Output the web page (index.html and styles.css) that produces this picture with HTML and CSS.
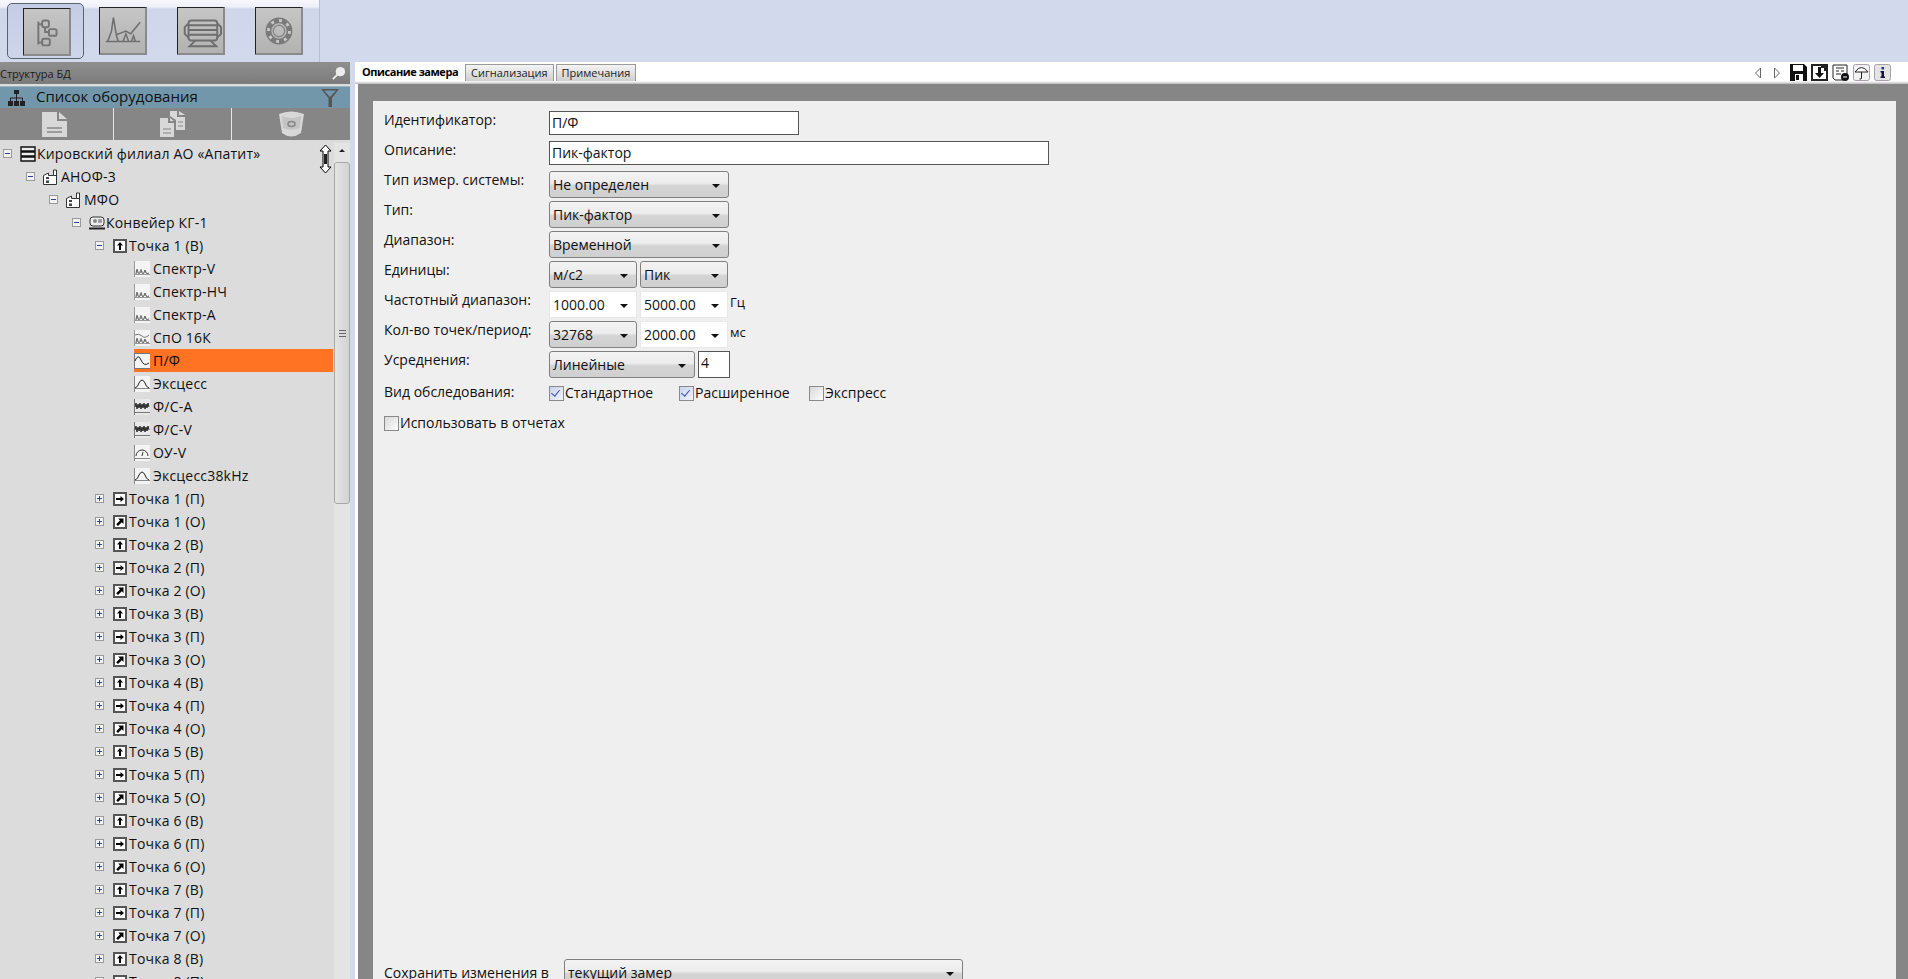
FILE: index.html
```html
<!DOCTYPE html>
<html lang="ru">
<head>
  <meta charset="UTF-8" />
  <title>Структура БД</title>
  <link rel="stylesheet" href="styles.css">
</head>
<body>

  <svg class="sprite" xmlns="http://www.w3.org/2000/svg">
    <symbol id="i-up" viewBox="0 0 14 14"><rect x="1" y="1" width="12" height="12" fill="#fff" stroke="#555" stroke-width="2"/><path d="M7 3 L10 6.5 H8 V11 H6 V6.5 H4 Z" fill="#000"/></symbol>
    <symbol id="i-right" viewBox="0 0 14 14"><rect x="1" y="1" width="12" height="12" fill="#fff" stroke="#555" stroke-width="2"/><path d="M11 7 L7.5 10 V8 H3 V6 H7.5 V4 Z" fill="#000"/></symbol>
    <symbol id="i-diag" viewBox="0 0 14 14"><rect x="1" y="1" width="12" height="12" fill="#fff" stroke="#555" stroke-width="2"/><path d="M10.5 3.5 V9 L8.8 7.3 L5 11 L3.2 9.2 L7 5.4 L5.2 3.5 Z" fill="#000"/></symbol>
    <symbol id="i-spec" viewBox="0 0 16 16"><rect width="16" height="16" fill="#f4f4f4"/><path d="M.5 0 V16 M0 13.5 H16" stroke="#999"/><path d="M2 13 Q3 4 4 12 Q5 13 6 12 Q7 5 8 12 Q9 13 10 12 Q11 6 12 12 Q13 13 15 12" fill="none" stroke="#555"/></symbol>
    <symbol id="i-spo" viewBox="0 0 16 16"><rect width="16" height="16" fill="#f4f4f4"/><path d="M.5 0 V16 M0 13.5 H16" stroke="#999"/><path d="M2 13 Q3 4 4 12 Q5 13 6 12 Q7 5 8 12 Q9 13 10 12 Q11 6 12 12 Q13 13 15 12" fill="none" stroke="#555"/><path d="M1 5 Q5 3 8 6 T15 5" fill="none" stroke="#777"/></symbol>
    <symbol id="i-wave" viewBox="0 0 16 16"><rect width="16" height="16" fill="#f4f4f4"/><path d="M.5 0 V16 M0 .5 H16 M0 15.5 H16" stroke="#777"/><path d="M1 8 Q4 0 7 7 T15 10" fill="none" stroke="#222"/></symbol>
    <symbol id="i-bell" viewBox="0 0 16 16"><rect width="16" height="16" fill="#f4f4f4"/><path d="M.5 0 V16 M0 12.5 H16" stroke="#888"/><path d="M1 12 Q4 11 5 7 Q8 1 11 7 Q12 11 15 12" fill="none" stroke="#222"/></symbol>
    <symbol id="i-noise" viewBox="0 0 16 16"><rect width="16" height="16" fill="#e8e8e8"/><path d="M.5 0 V16 M0 13.5 H16" stroke="#777"/><path d="M1 8 L2 4 L3 10 L4 5 L5 9 L6 4 L7 10 L8 5 L9 9 L10 4 L11 10 L12 5 L13 9 L14 4 L15 8" fill="none" stroke="#222"/></symbol>
    <symbol id="i-gauge" viewBox="0 0 16 16"><rect width="16" height="16" fill="#f4f4f4"/><path d="M.5 0 V16 M0 13.5 H16" stroke="#888"/><path d="M2 11 A6 6 0 0 1 14 11 M8 11 L9 7" fill="none" stroke="#333"/></symbol>
    <symbol id="i-machine" viewBox="0 0 16 16"><rect x="1" y="2" width="14" height="9" rx="3" fill="#eee" stroke="#333"/><circle cx="6" cy="6" r="2" fill="#888"/><path d="M9 5 H13 M9 7 H13" stroke="#555"/><path d="M0 13.5 H16" stroke="#222" stroke-width="2"/></symbol>
    <symbol id="i-plant" viewBox="0 0 16 16"><path d="M.5 6.5 L5.5 4 V6.5 H10.5 V1 H13.5 V15.5 H.5 Z" fill="#fff" stroke="#333"/><path d="M3 8 H6 V10 H3 Z M3 11.5 H6 V14 H3 Z" fill="#444"/><path d="M10.5 6.5 H13.5" stroke="#333"/></symbol>
    <symbol id="i-server" viewBox="0 0 16 16"><path d="M1 1 H15 V5 H1 Z M1 6 H15 V10 H1 Z M1 11 H15 V15 H1 Z" fill="#eee" stroke="#111" stroke-width="1.4"/></symbol>
  </svg>

  <header class="topbar">
    <div class="ribbon">
      <div class="tool-selected">
        <div class="tool-btn">
          <svg viewBox="0 0 47 47"><g fill="none" stroke="#757575" stroke-width="2"><path d="M15 13 V37 M15 16 H19 M15 35 H19 M22 19 V24 H26"/><rect x="19" y="12" width="7" height="7" rx="2"/><rect x="26" y="21" width="8" height="7" rx="2"/><rect x="19" y="31" width="8" height="7" rx="2"/></g></svg>
        </div>
      </div>
      <div class="tool-btn">
        <svg viewBox="0 0 47 47"><g fill="none" stroke="#6f6f6f" stroke-width="1.6"><path d="M6 35 H42"/><path d="M8 35 L12 24 L14 10 L17 28 L19 35 M17 28 L22 26 L27 24 L32 27 L42 15"/><path d="M24 35 L27 27 L30 35 M33 35 L35 29 L37 35"/></g></svg>
      </div>
      <div class="tool-btn">
        <svg viewBox="0 0 47 47"><g fill="none" stroke="#6e6e6e" stroke-width="2"><rect x="11" y="13" width="30" height="21" rx="3"/><path d="M11 18 H41 M11 23 H41 M11 28 H41"/><path d="M11 16 L7 20 V27 L11 31 M41 16 L45 20 V27 L41 31"/><path d="M18 34 L12 40 H40 L34 34"/></g></svg>
      </div>
      <div class="tool-btn">
        <svg viewBox="0 0 47 47"><circle cx="24" cy="24" r="11" fill="none" stroke="#7a7a7a" stroke-width="6"/><circle cx="24" cy="24" r="11" fill="none" stroke="#c9c9c9" stroke-width="3" stroke-dasharray="3 5.6"/><circle cx="24" cy="24" r="6" fill="none" stroke="#8a8a8a" stroke-width="1.5"/></svg>
      </div>
    </div>
  </header>

  <div class="main">
    <aside class="sidebar">
      <div class="side-title">
        <span>Структура БД</span>
        <svg class="pin" viewBox="0 0 16 16"><circle cx="10" cy="6" r="5" fill="#ededed"/><path d="M7 9 L2 14" stroke="#eee" stroke-width="2"/></svg>
      </div>
      <div class="list-head">
        <svg class="org-icon" viewBox="0 0 17 16"><g fill="#222"><rect x="6" y="0" width="5" height="4"/><rect x="0" y="11" width="5" height="5"/><rect x="6" y="11" width="5" height="5"/><rect x="12" y="11" width="5" height="5"/></g><path d="M8.5 4 V11 M2.5 11 V8 H14.5 V11" fill="none" stroke="#222"/></svg>
        <span class="list-title">Список оборудования</span>
        <svg class="funnel" viewBox="0 0 20 20"><path d="M1 1 H19 L12 10 V19 H8.5 V10 Z M4 2.5 L10 9 L16 2.5 Z" fill="#555" fill-rule="evenodd"/></svg>
      </div>
      <div class="doc-tools">
        <div class="doc-tool doc-new">
          <svg viewBox="0 0 27 27" width="27" height="27"><path d="M1 1 H16 V10 H26 V26 H1 Z M18 1 L26 8 H18 Z" fill="#d8d8d8"/><path d="M6 17 H21 M6 21 H21" stroke="#868686" stroke-width="1.5"/></svg>
        </div>
        <div class="doc-tool doc-copy">
          <svg viewBox="0 0 27 27" width="27" height="27"><path d="M11 0 H18 V6 H26 V19 H17 V9 L11 5 Z M20 0 L26 4 H20 Z" fill="#d8d8d8"/><path d="M1 7 H9 V12 H15 V26 H1 Z M11 7 L15 10 H11 Z" fill="#d8d8d8"/><path d="M4 18 H12 M4 22 H12 M19 11 H24 M19 15 H24" stroke="#868686"/></svg>
        </div>
        <div class="doc-tool doc-del">
          <svg viewBox="0 0 27 27" width="27" height="27"><path d="M1 3 Q13 -2 26 3 L23 22 Q13 29 4 22 Z" fill="#d8d8d8"/><path d="M4 5 Q13 9 23 5 L22 17 Q13 20 5 17 Z" fill="#868686" opacity=".25"/><ellipse cx="13.5" cy="13" rx="3.5" ry="2.5" fill="none" stroke="#868686" stroke-width="1.5"/></svg>
        </div>
      </div>

      <div class="tree-wrap">
        <div class="tree">
          <div class="node lv0"><i class="exp minus"></i><svg class="ic16"><use href="#i-server"/></svg><span>Кировский филиал АО «Апатит»</span></div>
          <div class="node lv1"><i class="exp minus"></i><svg class="ic16"><use href="#i-plant"/></svg><span>АНОФ-3</span></div>
          <div class="node lv2"><i class="exp minus"></i><svg class="ic16"><use href="#i-plant"/></svg><span>МФО</span></div>
          <div class="node lv3"><i class="exp minus"></i><svg class="ic16"><use href="#i-machine"/></svg><span>Конвейер КГ-1</span></div>
          <div class="node lv4"><i class="exp minus"></i><svg class="ic14"><use href="#i-up"/></svg><span>Точка 1 (В)</span></div>
          <div class="node lv5"><svg class="ic16"><use href="#i-spec"/></svg><span>Спектр-V</span></div>
          <div class="node lv5"><svg class="ic16"><use href="#i-spec"/></svg><span>Спектр-НЧ</span></div>
          <div class="node lv5"><svg class="ic16"><use href="#i-spec"/></svg><span>Спектр-А</span></div>
          <div class="node lv5"><svg class="ic16"><use href="#i-spo"/></svg><span>СпО 16К</span></div>
          <div class="node lv5 selected"><svg class="ic16"><use href="#i-wave"/></svg><span>П/Ф</span></div>
          <div class="node lv5"><svg class="ic16"><use href="#i-bell"/></svg><span>Эксцесс</span></div>
          <div class="node lv5"><svg class="ic16"><use href="#i-noise"/></svg><span>Ф/С-А</span></div>
          <div class="node lv5"><svg class="ic16"><use href="#i-noise"/></svg><span>Ф/С-V</span></div>
          <div class="node lv5"><svg class="ic16"><use href="#i-gauge"/></svg><span>ОУ-V</span></div>
          <div class="node lv5"><svg class="ic16"><use href="#i-bell"/></svg><span>Эксцесс38kHz</span></div>
          <div class="node lv4"><i class="exp plus"></i><svg class="ic14"><use href="#i-right"/></svg><span>Точка 1 (П)</span></div>
          <div class="node lv4"><i class="exp plus"></i><svg class="ic14"><use href="#i-diag"/></svg><span>Точка 1 (О)</span></div>
          <div class="node lv4"><i class="exp plus"></i><svg class="ic14"><use href="#i-up"/></svg><span>Точка 2 (В)</span></div>
          <div class="node lv4"><i class="exp plus"></i><svg class="ic14"><use href="#i-right"/></svg><span>Точка 2 (П)</span></div>
          <div class="node lv4"><i class="exp plus"></i><svg class="ic14"><use href="#i-diag"/></svg><span>Точка 2 (О)</span></div>
          <div class="node lv4"><i class="exp plus"></i><svg class="ic14"><use href="#i-up"/></svg><span>Точка 3 (В)</span></div>
          <div class="node lv4"><i class="exp plus"></i><svg class="ic14"><use href="#i-right"/></svg><span>Точка 3 (П)</span></div>
          <div class="node lv4"><i class="exp plus"></i><svg class="ic14"><use href="#i-diag"/></svg><span>Точка 3 (О)</span></div>
          <div class="node lv4"><i class="exp plus"></i><svg class="ic14"><use href="#i-up"/></svg><span>Точка 4 (В)</span></div>
          <div class="node lv4"><i class="exp plus"></i><svg class="ic14"><use href="#i-right"/></svg><span>Точка 4 (П)</span></div>
          <div class="node lv4"><i class="exp plus"></i><svg class="ic14"><use href="#i-diag"/></svg><span>Точка 4 (О)</span></div>
          <div class="node lv4"><i class="exp plus"></i><svg class="ic14"><use href="#i-up"/></svg><span>Точка 5 (В)</span></div>
          <div class="node lv4"><i class="exp plus"></i><svg class="ic14"><use href="#i-right"/></svg><span>Точка 5 (П)</span></div>
          <div class="node lv4"><i class="exp plus"></i><svg class="ic14"><use href="#i-diag"/></svg><span>Точка 5 (О)</span></div>
          <div class="node lv4"><i class="exp plus"></i><svg class="ic14"><use href="#i-up"/></svg><span>Точка 6 (В)</span></div>
          <div class="node lv4"><i class="exp plus"></i><svg class="ic14"><use href="#i-right"/></svg><span>Точка 6 (П)</span></div>
          <div class="node lv4"><i class="exp plus"></i><svg class="ic14"><use href="#i-diag"/></svg><span>Точка 6 (О)</span></div>
          <div class="node lv4"><i class="exp plus"></i><svg class="ic14"><use href="#i-up"/></svg><span>Точка 7 (В)</span></div>
          <div class="node lv4"><i class="exp plus"></i><svg class="ic14"><use href="#i-right"/></svg><span>Точка 7 (П)</span></div>
          <div class="node lv4"><i class="exp plus"></i><svg class="ic14"><use href="#i-diag"/></svg><span>Точка 7 (О)</span></div>
          <div class="node lv4"><i class="exp plus"></i><svg class="ic14"><use href="#i-up"/></svg><span>Точка 8 (В)</span></div>
          <div class="node lv4"><i class="exp plus"></i><svg class="ic14"><use href="#i-right"/></svg><span>Точка 8 (П)</span></div>
        </div>
        <svg class="drag-cursor" viewBox="0 0 13 30"><path d="M6.5 1 L12 7 H9 V23 H12 L6.5 29 L1 23 H4 V7 H1 Z" fill="#fff" stroke="#000"/><path d="M5 10 H8 V20 H5 Z" fill="#222"/></svg>
        <div class="scrollbar">
          <div class="scroll-btn"></div>
          <div class="scroll-thumb"><b></b></div>
        </div>
      </div>
    </aside>

    <div class="splitter"></div>

    <section class="content">
      <div class="tabbar">
        <div class="tab active">Описание замера</div>
        <div class="tab">Сигнализация</div>
        <div class="tab">Примечания</div>
        <div class="tab-tools">
          <svg class="nav-arrow" viewBox="0 0 8 12"><path d="M6.5 1 L1.5 6 L6.5 11 Z" fill="#fff" stroke="#666"/></svg>
          <svg class="nav-arrow" viewBox="0 0 8 12"><path d="M1.5 1 L6.5 6 L1.5 11 Z" fill="#fff" stroke="#666"/></svg>
          <svg class="act" viewBox="0 0 17 17"><path d="M0 0 H14 L17 3 V17 H0 Z" fill="#111"/><rect x="3" y="1" width="10" height="6" fill="#fff"/><rect x="5" y="10" width="8" height="7" fill="#fff"/><rect x="6" y="11" width="3" height="5" fill="#111"/></svg>
          <svg class="act" viewBox="0 0 17 17"><path d="M1 1 H16 V16 H1 Z" fill="#fff" stroke="#222" stroke-width="2"/><path d="M10 0 H17 V7 H13 V4 H10 Z" fill="#222"/><path d="M7 3 H10 V9 H13 L8.5 14 L4 9 H7 Z" fill="#111"/></svg>
          <svg class="act" viewBox="0 0 17 17"><path d="M1 1 H15 V12 L11 16 H3 L1 14 Z" fill="#fff" stroke="#222"/><path d="M4 4 H12 M4 7 H7 M9 7 H12 M4 10 H9" stroke="#222"/><circle cx="13" cy="13" r="4" fill="#111"/><path d="M11 13 H15" stroke="#fff"/></svg>
          <svg class="act" viewBox="0 0 17 17"><rect x=".5" y=".5" width="16" height="16" rx="2" fill="#f2f2f2" stroke="#a9a0a9"/><path d="M2 8 Q8.5 -1 15 8 Z" fill="#fff" stroke="#222"/><path d="M8.5 8 V14 Q8.5 15.5 6.5 15" fill="none" stroke="#222"/></svg>
          <svg class="act" viewBox="0 0 17 17"><rect x=".5" y=".5" width="16" height="16" rx="2" fill="#e4e4e4" stroke="#a9a0a9"/><rect x="7.5" y="3" width="2.5" height="2.4" fill="#1d2f7a"/><path d="M6.5 7 H10 V12.5 H11 V14 H6.5 V12.5 H7.5 V8.5 H6.5 Z" fill="#14143a"/></svg>
        </div>
      </div>

      <div class="stage">
        <form class="panel">
          <div class="row row-input">
            <label>Идентификатор:</label>
            <div class="input w-id">П/Ф</div>
          </div>
          <div class="row row-input">
            <label>Описание:</label>
            <div class="input w-desc">Пик-фактор</div>
          </div>
          <div class="row">
            <label>Тип измер. системы:</label>
            <div class="select w-full">Не определен</div>
          </div>
          <div class="row">
            <label>Тип:</label>
            <div class="select w-full">Пик-фактор</div>
          </div>
          <div class="row">
            <label>Диапазон:</label>
            <div class="select w-full">Временной</div>
          </div>
          <div class="row">
            <label>Единицы:</label>
            <div class="select w-half">м/с2</div>
            <div class="select w-half">Пик</div>
          </div>
          <div class="row">
            <label>Частотный диапазон:</label>
            <div class="select flat w-half">1000.00</div>
            <div class="select flat w-half">5000.00</div>
            <span class="unit">Гц</span>
          </div>
          <div class="row">
            <label>Кол-во точек/период:</label>
            <div class="select w-half">32768</div>
            <div class="select flat w-half">2000.00</div>
            <span class="unit">мс</span>
          </div>
          <div class="row">
            <label>Усреднения:</label>
            <div class="select w-avg">Линейные</div>
            <div class="input w-count">4</div>
          </div>
          <div class="row row-checks">
            <label>Вид обследования:</label>
            <div class="check check-std checked">Стандартное</div>
            <div class="check check-ext checked">Расширенное</div>
            <div class="check">Экспресс</div>
          </div>
          <div class="row row-report">
            <div class="check">Использовать в отчетах</div>
          </div>
          <div class="row row-save">
            <label class="save-label">Сохранить изменения в</label>
            <div class="select w-save">текущий замер</div>
          </div>
        </form>
      </div>
    </section>
  </div>

</body>
</html>
```

FILE: styles.css
```css
* {
  box-sizing: border-box;
}

html, body {
  margin: 0;
  height: 979px;
  overflow: hidden;
}

body {
  font-family: "Open Sans", "Noto Sans", sans-serif;
  font-size: 14px;
  color: #111;
  background: #d3d9ec;
}

.sprite {
  display: block;
  width: 0;
  height: 0;
}

/* top toolbar */
.topbar {
  height: 62px;
  display: flex;
}

.ribbon {
  width: 320px;
  height: 62px;
  display: flex;
  align-items: flex-start;
  gap: 30px;
  padding: 7px 0 0 23px;
  border-right: 1px solid #b8bfd4;
  background: linear-gradient(#f7f8fc 0, #eef0f8 7px, #cfd6ea 9px, #d3d9ec 100%);
  position: relative;
}

.tool-selected {
  position: absolute;
  left: 7px;
  top: 3px;
  width: 77px;
  height: 56px;
  padding: 4px 0 0 15px;
  border: 1px solid #5b6270;
  border-radius: 5px;
  background: linear-gradient(#c4cde4, #cdd5ea);
}

.ribbon > .tool-selected + .tool-btn {
  margin-left: 76px;
}

.tool-btn {
  width: 48px;
  height: 48px;
  border-top: 1px solid #222;
  border-left: 1px solid #222;
  border-right: 2px solid #8a8a8a;
  border-bottom: 2px solid #8a8a8a;
  background: linear-gradient(#c6c6c6, #b2b2b2);
}

.tool-btn svg {
  display: block;
  width: 45px;
  height: 45px;
}

/* main area */
.main {
  height: 917px;
  display: flex;
}

.sidebar {
  width: 350px;
  display: flex;
  flex-direction: column;
  background: #dcdcdc;
}

.splitter {
  width: 5px;
  background: #d3d9ec;
}

.side-title {
  height: 22px;
  display: flex;
  align-items: center;
  justify-content: space-between;
  padding: 0 4px 0 0;
  font-size: 11px;
  color: #1a1a1a;
  background: linear-gradient(#8f8f8f, #7b7b7b);
}

.pin {
  width: 15px;
  height: 15px;
}

.list-head {
  height: 22px;
  margin-top: 2px;
  display: flex;
  align-items: center;
  padding: 0 10px 0 8px;
  border-top: 1px solid #9fb4c0;
  background: #7297ab;
  font-size: 15px;
  color: #111;
}

.org-icon {
  width: 17px;
  height: 16px;
}

.list-title {
  margin-left: 11px;
  margin-bottom: 4px;
  line-height: 20px;
  flex: 1;
}

.funnel {
  width: 20px;
  height: 20px;
}

.doc-tools {
  height: 32px;
  display: flex;
  background: #868686;
}

.doc-tool {
  display: flex;
  align-items: center;
  justify-content: center;
}

.doc-new {
  width: 113px;
  padding-right: 4px;
}

.doc-copy {
  width: 118px;
  border-left: 1px solid #e6e6e6;
}

.doc-del {
  flex: 1;
  border-left: 1px solid #e6e6e6;
}

.tree-wrap {
  flex: 1;
  min-height: 0;
  display: flex;
  position: relative;
  overflow: hidden;
}

.tree {
  flex: 1;
  padding-top: 2px;
  overflow: hidden;
  font-size: 14px;
  letter-spacing: .2px;
}

.node {
  height: 23px;
  display: flex;
  align-items: center;
  white-space: nowrap;
}

.node span {
  margin-left: 2px;
}

.lv0 { padding-left: 3px; }
.lv1 { padding-left: 26px; }
.lv2 { padding-left: 49px; }
.lv3 { padding-left: 72px; }
.lv4 { padding-left: 95px; }
.lv5 { padding-left: 0; margin-left: 134px; }

.lv0 span,
.lv3 span {
  margin-left: 1px;
}

.lv5 span {
  margin-left: 3px;
}

.node.selected {
  background: #ff7322;
  margin-right: 1px;
}

.exp {
  width: 9px;
  height: 9px;
  margin-right: 8px;
  flex: none;
  border: 1px solid #9a9a9a;
  background: #f2f2f2 linear-gradient(#2f3f9a, #2f3f9a) center / 5px 1px no-repeat;
}

.exp.plus {
  background: linear-gradient(#2f3f9a, #2f3f9a) center / 5px 1px no-repeat,
    linear-gradient(#2f3f9a, #2f3f9a) center / 1px 5px no-repeat,
    #f2f2f2;
}

.lv4 .exp {
  margin-right: 9px;
}

.ic16 {
  width: 16px;
  height: 16px;
  flex: none;
}

.ic14 {
  width: 14px;
  height: 14px;
  flex: none;
}

.drag-cursor {
  position: absolute;
  left: 319px;
  top: 4px;
  width: 13px;
  height: 30px;
}

.scrollbar {
  width: 16px;
  flex: none;
  margin-top: 3px;
  background: #e4e4e4;
}

.scroll-btn {
  height: 17px;
  position: relative;
}

.scroll-btn::after {
  content: "";
  position: absolute;
  left: 5px;
  top: 6px;
  border-left: 3px solid transparent;
  border-right: 3px solid transparent;
  border-bottom: 3px solid #222;
}

.scroll-thumb {
  height: 342px;
  margin-top: 2px;
  display: flex;
  align-items: center;
  justify-content: center;
  border: 1px solid #a8a8a8;
  border-radius: 3px;
  background: linear-gradient(90deg, #e4e4e4, #d2d2d2);
}

.scroll-thumb b {
  width: 7px;
  height: 7px;
  background: repeating-linear-gradient(#666 0 1px, transparent 1px 3px);
}

/* right side */
.content {
  flex: 1;
  min-width: 0;
  display: flex;
  flex-direction: column;
  background: #fff;
}

.tabbar {
  height: 22px;
  display: flex;
  align-items: flex-start;
  padding: 2px 0 0 7px;
  font-size: 11px;
  background: linear-gradient(#fff 19px, #bbb 22px);
}

.tab {
  height: 17px;
  padding: 0 5px;
  margin-right: 2px;
  line-height: 16px;
  border: 1px solid #9a9a9a;
  border-bottom: 0;
  color: #222;
  background: linear-gradient(#f4f4f4, #cfcfcf);
}

.tab.active {
  padding: 0;
  margin-right: 7px;
  border: 0;
  color: #000;
  font-weight: 700;
  letter-spacing: -.45px;
  background: #fff;
}

.tab-tools {
  margin-left: auto;
  display: flex;
  align-items: center;
  height: 17px;
  padding-right: 17px;
  gap: 4px;
}

.nav-arrow {
  width: 8px;
  height: 12px;
  margin-right: 7px;
}

.nav-arrow + .nav-arrow {
  margin-right: 5px;
}

.act {
  width: 17px;
  height: 17px;
}

.stage {
  flex: 1;
  min-height: 0;
  padding: 17px 12px 0 15px;
  border-left: 3px solid #fff;
  background: #868686;
}

.panel {
  height: 100%;
  padding: 10px 0 0 11px;
  background: #efefef;
  overflow: hidden;
}

.row {
  display: flex;
  align-items: flex-start;
  gap: 3px;
  margin-bottom: 3px;
  white-space: nowrap;
}

.row-input {
  margin-bottom: 6px;
}

.row label {
  width: 162px;
  flex: none;
  line-height: 18px;
}

.input {
  height: 24px;
  line-height: 22px;
  padding-left: 2px;
  border: 1px solid #555;
  background: #fff;
  font-size: 14px;
}

.w-id { width: 250px; }
.w-desc { width: 500px; }
.w-full { width: 180px; }
.w-half { width: 88px; }
.w-avg { width: 146px; }
.w-count {
  width: 32px;
  height: 27px;
}
.w-save { width: 399px; }

.select {
  height: 27px;
  line-height: 26px;
  padding-left: 3px;
  position: relative;
  border: 1px solid #808080;
  border-radius: 3px;
  background: linear-gradient(#f3f3f3 0, #ececec 45%, #d4d4d4 55%, #d0d0d0 100%);
  font-size: 14px;
}

.select::after {
  content: "";
  position: absolute;
  right: 8px;
  top: 12px;
  border-left: 4px solid transparent;
  border-right: 4px solid transparent;
  border-top: 4px solid #111;
}

.select.flat {
  border-color: #e8e8e8;
  border-radius: 0;
  background: #fff;
}

.unit {
  line-height: 22px;
  margin-left: -1px;
  font-size: 13px;
}

.row-checks {
  margin-top: 5px;
  margin-bottom: 0;
  gap: 0;
}

.row-checks label {
  width: 165px;
}

.check {
  height: 20px;
  line-height: 20px;
  padding-left: 16px;
  position: relative;
  font-size: 14px;
}

.check::before {
  content: "";
  position: absolute;
  left: 0;
  top: 3px;
  width: 13px;
  height: 13px;
  border: 1px solid #8a8a8a;
  background: linear-gradient(135deg, #d8d8d8, #fdfdfd);
}

.check.checked::before {
  background: linear-gradient(135deg, #c9d2ee, #f2f4fb);
}

.check.checked::after {
  content: "";
  position: absolute;
  left: 4px;
  top: 5px;
  width: 4px;
  height: 7px;
  border: solid #3a4ea8;
  border-width: 0 1.5px 1.5px 0;
  transform: rotate(40deg);
}

.check-std,
.check-ext {
  width: 130px;
}

.row-report {
  margin-top: 10px;
}

.row-save {
  margin-top: 526px;
  gap: 0;
}

.row .save-label {
  width: 180px;
  padding-top: 5px;
}
```
